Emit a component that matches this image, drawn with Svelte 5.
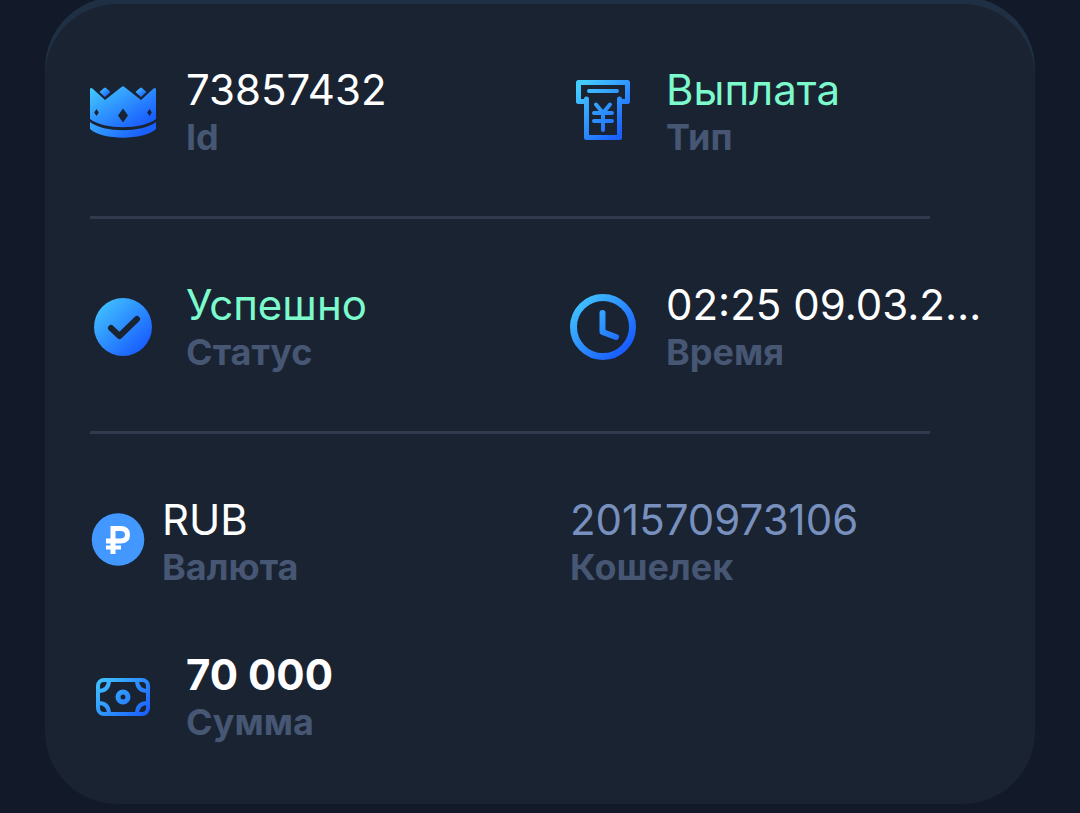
<script>
	const rows = [
		[
			{ icon: 'crown', value: '73857432', label: 'Id' },
			{ icon: 'atm', value: 'Выплата', label: 'Тип', tone: 'green' }
		],
		[
			{ icon: 'check', value: 'Успешно', label: 'Статус', tone: 'green' },
			{ icon: 'clock', value: '02:25 09.03.2022', label: 'Время' }
		],
		[
			{ icon: 'ruble', value: 'RUB', label: 'Валюта' },
			{ value: '201570973106', label: 'Кошелек', tone: 'muted' },
			{ icon: 'cash', value: '70 000', label: 'Сумма', tone: 'bold' }
		]
	];
</script>

<svg class="defs" aria-hidden="true">
	<defs>
		<linearGradient id="blue" x1="0" y1="0" x2="1" y2="1">
			<stop offset="0" stop-color="#45ccff" />
			<stop offset="0.85" stop-color="#1a60ff" />
		</linearGradient>
		<linearGradient id="blueIcon" gradientUnits="userSpaceOnUse" x1="8" y1="8" x2="52" y2="54">
			<stop offset="0" stop-color="#45ccff" />
			<stop offset="1" stop-color="#1a60ff" />
		</linearGradient>
	</defs>
</svg>

<main>
	{#each rows as row}
		<section>
			{#each row as item}
				<div class="item {item.icon}">
					{#if item.icon === 'crown'}
						<svg viewBox="0 0 66 66" aria-hidden="true">
							<path fill="url(#blue)" fill-rule="evenodd" d="M0 10Q1 8 3 10L15 21L31.500 8Q33 6.500 34.500 8L51 21L63 10Q65 8 66 10V40C52 51 14 51 0 40ZM33 29.500L28 36.500L33 43.500L38 36.500ZM6.500 30L4.200 33.500L6.500 37L8.800 33.500ZM59.500 30L57.200 33.500L59.500 37L61.800 33.500Z" />
							<path fill="url(#blueIcon)" d="M0 43C14 54 52 54 66 43V50C54 61.500 12 61.500 0 50Z" />
							<path fill="url(#blue)" d="M9.500 13L14 9Q15 8 16 9L20.500 13L15 18Z" />
							<path fill="url(#blue)" d="M45.500 13L50 9Q51 8 52 9L56.500 13L51 18Z" />
						</svg>
					{:else if item.icon === 'atm'}
						<svg viewBox="0 0 66 66" aria-hidden="true">
							<g class="stroke">
								<path d="M16 22.500H8.500V3.500H57.500V22.500H50" />
								<path d="M16.500 20V58.500H49.500V20" />
								<path class="thin" d="M19 12H47" />
								<path class="thin" d="M26 25.500L33 34L40 25.500M24 34H42M24 42H42M33 34V51" />
							</g>
						</svg>
					{:else if item.icon === 'check'}
						<svg viewBox="0 0 66 66" aria-hidden="true">
							<circle cx="33" cy="33" r="29" fill="url(#blue)" />
							<path class="tick" d="M21 34L29.500 42L47 25" />
						</svg>
					{:else if item.icon === 'clock'}
						<svg viewBox="0 0 66 66" aria-hidden="true">
							<circle cx="33" cy="33" r="29.500" fill="none" stroke="url(#blue)" stroke-width="7" />
							<path d="M32.500 19V38L46 43" fill="none" stroke="url(#blueIcon)" stroke-width="6" stroke-linecap="round" stroke-linejoin="round" />
						</svg>
					{:else if item.icon === 'ruble'}
						<svg viewBox="0 0 54 54" aria-hidden="true">
							<circle cx="28" cy="24.500" r="26.300" fill="#4298ff" />
							<path class="stem" d="M23 39V13.500H30.500Q37.500 13.500 37.500 19.700Q37.500 26 30.500 26H16" />
							<path class="bar" d="M16 32.500H31" />
						</svg>
					{:else if item.icon === 'cash'}
						<svg viewBox="0 0 66 66" aria-hidden="true">
							<g class="stroke">
								<rect class="thin" x="8" y="16" width="50" height="34" rx="6" />
								<circle cx="33" cy="33" r="5" />
								<path class="thin" d="M19 16Q19 27 8 27M47 16Q47 27 58 27M8 39Q19 39 19 50M58 39Q47 39 47 50" />
							</g>
						</svg>
					{/if}
					<div class="text">
						<p class="value {item.tone}">{item.value}</p>
						<p class="label">{item.label}</p>
					</div>
				</div>
			{/each}
		</section>
	{/each}
</main>

<style>
	:global(body) {
		margin: 0;
		background: #121928;
		font-family: Inter, 'Noto Sans', sans-serif;
	}

	:global(#app) {
		display: flow-root;
	}

	.defs {
		position: absolute;
		width: 0;
		height: 0;
	}

	main {
		margin: -3px 45px 9px;
		padding: 65px 45px 57px;
		border-radius: 72px;
		background: #192332;
		box-shadow: inset 0 7px #203044;
	}

	section {
		display: grid;
		grid-template-columns: repeat(2, minmax(0, 1fr));
		gap: 55px 60px;
	}

	section + section::before {
		content: '';
		grid-column: 1 / -1;
		height: 3px;
		margin: 54px 60px 3px 0;
		background: #303b4e;
	}

	.item {
		display: flex;
		align-items: center;
		gap: 30px;
		min-width: 0;
	}

	.item svg {
		flex: none;
		width: 66px;
		height: 66px;
	}

	.ruble {
		gap: 18px;
	}

	.ruble svg {
		width: 54px;
		height: 54px;
		overflow: visible;
	}

	.stroke {
		fill: none;
		stroke: url(#blueIcon);
		stroke-width: 5;
		stroke-linecap: round;
		stroke-linejoin: round;
	}

	.thin {
		stroke-width: 4;
	}

	.tick {
		fill: none;
		stroke: #192332;
		stroke-width: 6;
		stroke-linecap: round;
		stroke-linejoin: round;
	}

	.stem,
	.bar {
		fill: none;
		stroke: #fff;
		stroke-width: 4;
	}

	.stem {
		stroke-width: 5;
	}

	.text {
		min-width: 0;
		padding-bottom: 6px;
	}

	p {
		margin: 0;
		white-space: nowrap;
	}

	.value {
		overflow: hidden;
		color: #fff;
		font-size: 42px;
		line-height: 56px;
		text-overflow: ellipsis;
	}

	.green {
		color: #7cfacc;
	}

	.muted {
		color: #7890bd;
	}

	.bold {
		font-weight: 700;
	}

	.label {
		color: #465673;
		font-size: 36px;
		font-weight: 700;
		line-height: 38px;
	}
</style>
